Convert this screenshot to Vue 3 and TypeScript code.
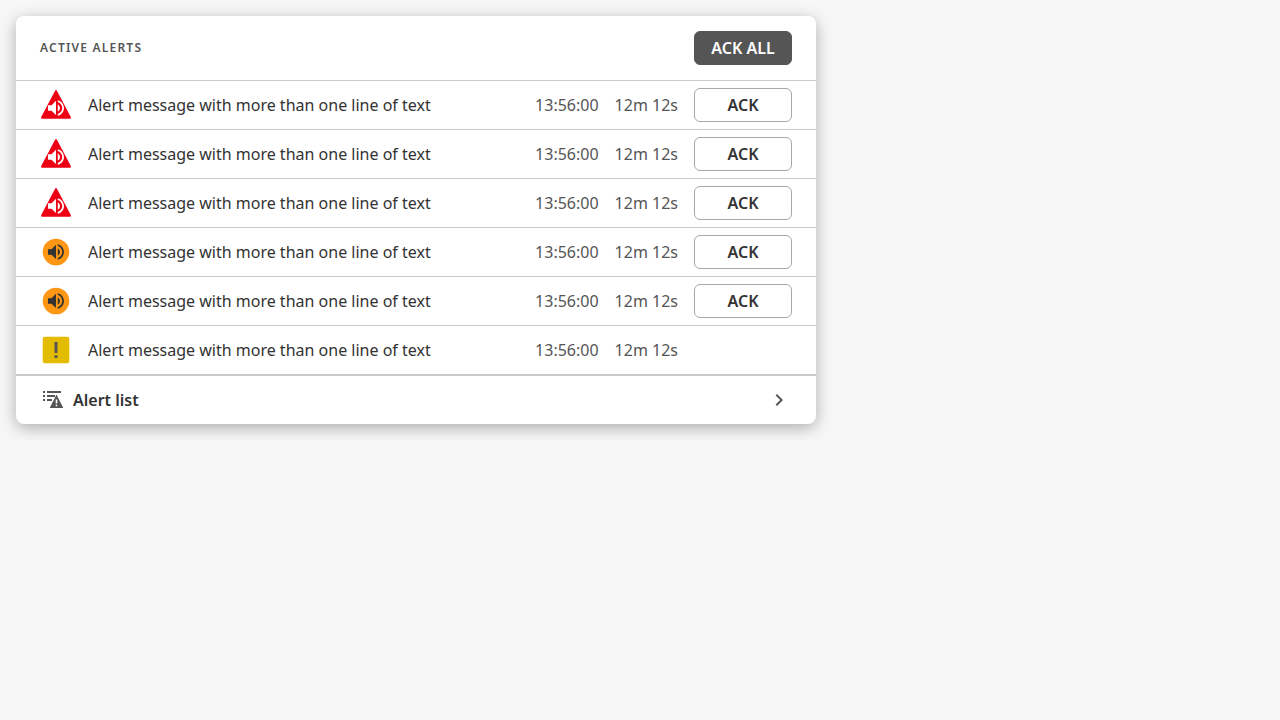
<script setup lang="ts">
type Level = 'alarm' | 'warning' | 'caution'

interface AlertItem {
  id: number
  level: Level
  message: string
  time: string
  duration: string
}

const levels: Level[] = ['alarm', 'alarm', 'alarm', 'warning', 'warning', 'caution']

const alerts: AlertItem[] = levels.map((level, index) => ({
  id: index + 1,
  level,
  message: 'Alert message with more than one line of text',
  time: '13:56:00',
  duration: '12m 12s',
}))

const speaker =
  'M14 3.230v2.060c2.890.86 5 3.540 5 6.710s-2.110 5.840-5 6.700v2.070c4-.91 7-4.490 7-8.770s-3-7.860-7-8.770M16.500 12c0-1.770-1-3.290-2.500-4.030V16c1.500-.71 2.500-2.240 2.500-4M3 9v6h4l5 5V4L7 9z'
</script>

<template>
  <main class="page">
    <section class="card" aria-labelledby="alerts-title">
      <header class="header">
        <h1 id="alerts-title" class="title">ACTIVE ALERTS</h1>
        <button type="button" class="button button-strong">ACK ALL</button>
      </header>

      <ul class="list">
        <li v-for="alert in alerts" :key="alert.id" class="row">
          <svg v-if="alert.level === 'alarm'" class="status" viewBox="0 0 32 32" aria-hidden="true">
            <path
              d="M15.200 1.500a1 1 0 0 1 1.600 0L30.800 28a1.200 1.200 0 0 1-1 1.700H2.200A1.200 1.200 0 0 1 1.200 28z"
              fill="#ee0014"
            />
            <path :d="speaker" transform="translate(5.300 8.300) scale(.89)" fill="#fff" />
          </svg>
          <svg v-else-if="alert.level === 'warning'" class="status" viewBox="0 0 32 32" aria-hidden="true">
            <circle cx="16" cy="16" r="13.300" fill="#ff9614" />
            <path :d="speaker" transform="translate(5.300 5.300) scale(.89)" fill="#333" />
          </svg>
          <svg v-else class="status" viewBox="0 0 32 32" aria-hidden="true">
            <rect x="2.700" y="2.700" width="26.600" height="26.600" rx="2" fill="#e3bb00" />
            <path d="M14.500 8h3v11h-3zM14.500 21.200h3V24h-3z" fill="#555" />
          </svg>
          <span class="message">{{ alert.message }}</span>
          <time class="meta">{{ alert.time }}</time>
          <span class="meta">{{ alert.duration }}</span>
          <span class="action">
            <button v-if="alert.level !== 'caution'" type="button" class="button">ACK</button>
          </span>
        </li>
      </ul>

      <a href="#" class="footer">
        <svg class="icon" viewBox="0 0 24 24" aria-hidden="true">
          <path
            d="M2 3h2v2H2zM6 3h14v2H6zM2 7h2v2H2zM6 7h8v2H6zM2 11h2v2H2zM6 11h5v2H6z"
            fill="#555"
          />
          <path
            fill-rule="evenodd"
            d="M15.500 6.500 22.300 20H8.700zM14.700 11.500v4h1.600v-4zM14.700 16.800v1.500h1.600v-1.500z"
            fill="#555"
          />
        </svg>
        <span class="footer-label">Alert list</span>
        <svg class="icon" viewBox="0 0 24 24" aria-hidden="true">
          <path d="M8.600 16.600 13.200 12 8.600 7.400 10 6l6 6-6 6z" fill="#555" />
        </svg>
      </a>
    </section>
  </main>
</template>

<style>
body {
  background: #f7f7f7;
}
</style>

<style scoped>
.page {
  padding: 16px;
  font-family: "Noto Sans", sans-serif;
  font-size: 16px;
  line-height: 24px;
  text-rendering: optimizeSpeed;
  color: #333;
}

.card {
  max-width: 800px;
  border-radius: 8px;
  background: #fff;
  box-shadow: 0 4px 16px rgba(0, 0, 0, 0.3);
}

.header {
  display: flex;
  align-items: center;
  justify-content: space-between;
  min-height: 64px;
  padding: 0 24px;
}

.title {
  margin: 0;
  font-size: 12px;
  font-weight: 600;
  letter-spacing: 0.1em;
  color: #555;
}

.list {
  margin: 0;
  padding: 0;
  list-style: none;
}

.row {
  display: flex;
  align-items: center;
  gap: 16px;
  min-height: 48px;
  padding: 0 24px;
  border-top: 1px solid #c9c9c9;
}

.status {
  flex: none;
  width: 32px;
  height: 32px;
}

.message {
  flex: 1;
  min-width: 0;
}

.meta {
  white-space: nowrap;
  color: #555;
}

.action {
  display: flex;
  width: 98px;
}

.button {
  box-sizing: border-box;
  width: 98px;
  height: 34px;
  padding: 0;
  border: 1px solid #a8a8a8;
  border-radius: 6px;
  background: #fff;
  font: inherit;
  font-weight: 600;
  color: #333;
  cursor: pointer;
}

.button-strong {
  border-color: #555;
  background: #555;
  color: #fff;
}

.footer {
  display: flex;
  align-items: center;
  gap: 8px;
  min-height: 48px;
  padding: 0 25px;
  border-top: 2px solid #c9c9c9;
  font-weight: 600;
  color: #333;
  text-decoration: none;
}

.footer-label {
  flex: 1;
}

.icon {
  flex: none;
  width: 24px;
  height: 24px;
}
</style>
